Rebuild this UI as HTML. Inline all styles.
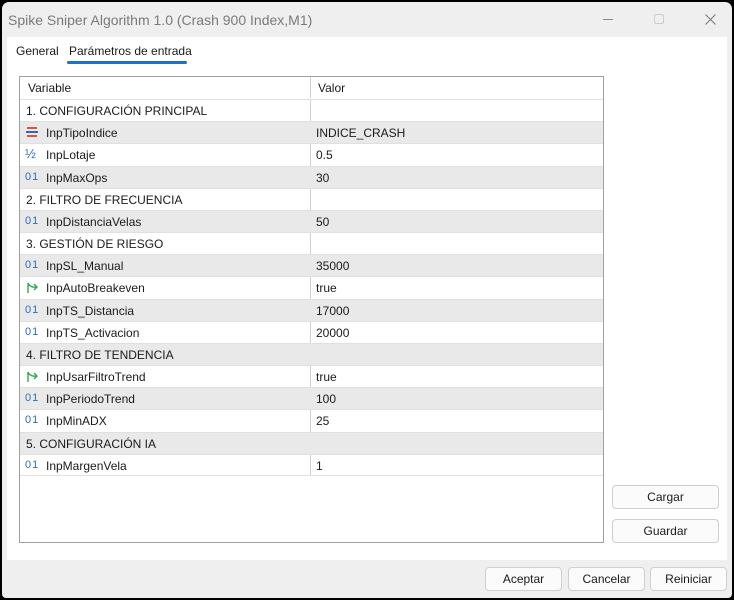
<!DOCTYPE html>
<html><head><meta charset="utf-8"><style>
*{margin:0;padding:0;box-sizing:border-box}
body{width:734px;height:600px;background:#000;position:relative;overflow:hidden;font-family:"Liberation Sans",sans-serif;font-size:12px;color:#1a1a1a}
.win{position:absolute;left:2px;top:2px;width:730px;height:596px;background:#efefef;border-radius:7px 7px 4px 4px;overflow:hidden}
.title{position:absolute;left:6px;top:10px;font-size:14px;color:#7a7a7a}
.panel{position:absolute;left:5px;top:35px;width:720px;height:523px;background:#fff}
.tab{position:absolute;top:44px;font-size:12px}
.ul{position:absolute;left:67px;top:61px;width:120px;height:3px;background:#1c73c4;border-radius:2px}
.tbl{position:absolute;left:19px;top:76px;width:585px;height:467px;border:1px solid #a0a0a0;background:#fff}
.hdr{height:22px;position:relative;border-bottom:1px solid #fff}
.row{height:22.18px;position:relative;border-top:1px solid #e0e0e0}
.g{background:#e9e9e9}
.c1{position:absolute;left:6px;top:4px;white-space:nowrap}
.c2{position:absolute;left:296px;top:4px}
.vl{position:absolute;left:290px;top:0;width:1px;height:399px;background:#d0d0d0}
.ic{position:absolute;left:5px;top:3px;width:14px;height:14px;font-size:11px}
.i01{color:#2a6fb5;font-size:11px;top:4px;letter-spacing:1px}
.ind{left:26px}
.btn{position:absolute;height:24px;border:1px solid #cfcfcf;border-radius:4px;background:#fbfbfb;text-align:center;line-height:22px;font-size:12px}
</style></head><body>
<div class="win">
<div class="title">Spike Sniper Algorithm 1.0 (Crash 900 Index,M1)</div>
<div style="position:absolute;left:601px;top:17px;width:10px;height:1px;background:#888"></div>
<div style="position:absolute;left:652px;top:12px;width:10px;height:10px;border:1px solid #ccc;border-radius:2px"></div>
<svg style="position:absolute;left:703px;top:12px" width="11" height="11" viewBox="0 0 11 11"><path d="M0.5 0.5 L10.5 10.5 M10.5 0.5 L0.5 10.5" stroke="#777" stroke-width="1"/></svg>
<div class="panel"></div>
</div>
<div class="tab" style="left:16px">General</div>
<div class="tab" style="left:69px">Parámetros de entrada</div>
<div class="ul"></div>
<div class="tbl">
<div class="vl"></div>
<div class="hdr"><span class="c1" style="left:8px">Variable</span><span class="c2" style="left:298px">Valor</span></div>
<div class="row"><span class="c1">1. CONFIGURACIÓN PRINCIPAL</span></div>
<div class="row g"><svg class="ic" viewBox="0 0 14 14"><rect x="2" y="2" width="10" height="2" fill="#d9534f"/><rect x="1" y="6" width="12" height="2" fill="#2a6fb5"/><rect x="2" y="10" width="10" height="2" fill="#d9534f"/></svg><span class="c1 ind">InpTipoIndice</span><span class="c2">INDICE_CRASH</span></div>
<div class="row"><span class="ic" style="color:#2a6fb5;font-size:13px;top:2px">½</span><span class="c1 ind">InpLotaje</span><span class="c2">0.5</span></div>
<div class="row g"><span class="ic i01">01</span><span class="c1 ind">InpMaxOps</span><span class="c2">30</span></div>
<div class="row"><span class="c1">2. FILTRO DE FRECUENCIA</span></div>
<div class="row g"><span class="ic i01">01</span><span class="c1 ind">InpDistanciaVelas</span><span class="c2">50</span></div>
<div class="row"><span class="c1">3. GESTIÓN DE RIESGO</span></div>
<div class="row g"><span class="ic i01">01</span><span class="c1 ind">InpSL_Manual</span><span class="c2">35000</span></div>
<div class="row"><svg class="ic" viewBox="0 0 14 14"><path d="M3 13 V3 M3 3 Q5 8 12 7 M9 4 L12 7 L9 10" stroke="#2fa84f" stroke-width="1.4" fill="none"/></svg><span class="c1 ind">InpAutoBreakeven</span><span class="c2">true</span></div>
<div class="row g"><span class="ic i01">01</span><span class="c1 ind">InpTS_Distancia</span><span class="c2">17000</span></div>
<div class="row"><span class="ic i01">01</span><span class="c1 ind">InpTS_Activacion</span><span class="c2">20000</span></div>
<div class="row g"><span class="c1">4. FILTRO DE TENDENCIA</span></div>
<div class="row"><svg class="ic" viewBox="0 0 14 14"><path d="M3 13 V3 M3 3 Q5 8 12 7 M9 4 L12 7 L9 10" stroke="#2fa84f" stroke-width="1.4" fill="none"/></svg><span class="c1 ind">InpUsarFiltroTrend</span><span class="c2">true</span></div>
<div class="row g"><span class="ic i01">01</span><span class="c1 ind">InpPeriodoTrend</span><span class="c2">100</span></div>
<div class="row"><span class="ic i01">01</span><span class="c1 ind">InpMinADX</span><span class="c2">25</span></div>
<div class="row g"><span class="c1">5. CONFIGURACIÓN IA</span></div>
<div class="row" style="border-bottom:1px solid #e0e0e0"><span class="ic i01">01</span><span class="c1 ind">InpMargenVela</span><span class="c2">1</span></div>
</div>
<div class="btn" style="left:612px;top:485px;width:107px">Cargar</div>
<div class="btn" style="left:612px;top:519px;width:107px">Guardar</div>
<div class="btn" style="left:485px;top:567px;width:77px">Aceptar</div>
<div class="btn" style="left:568px;top:567px;width:77px">Cancelar</div>
<div class="btn" style="left:650px;top:567px;width:77px">Reiniciar</div>
</body></html>
